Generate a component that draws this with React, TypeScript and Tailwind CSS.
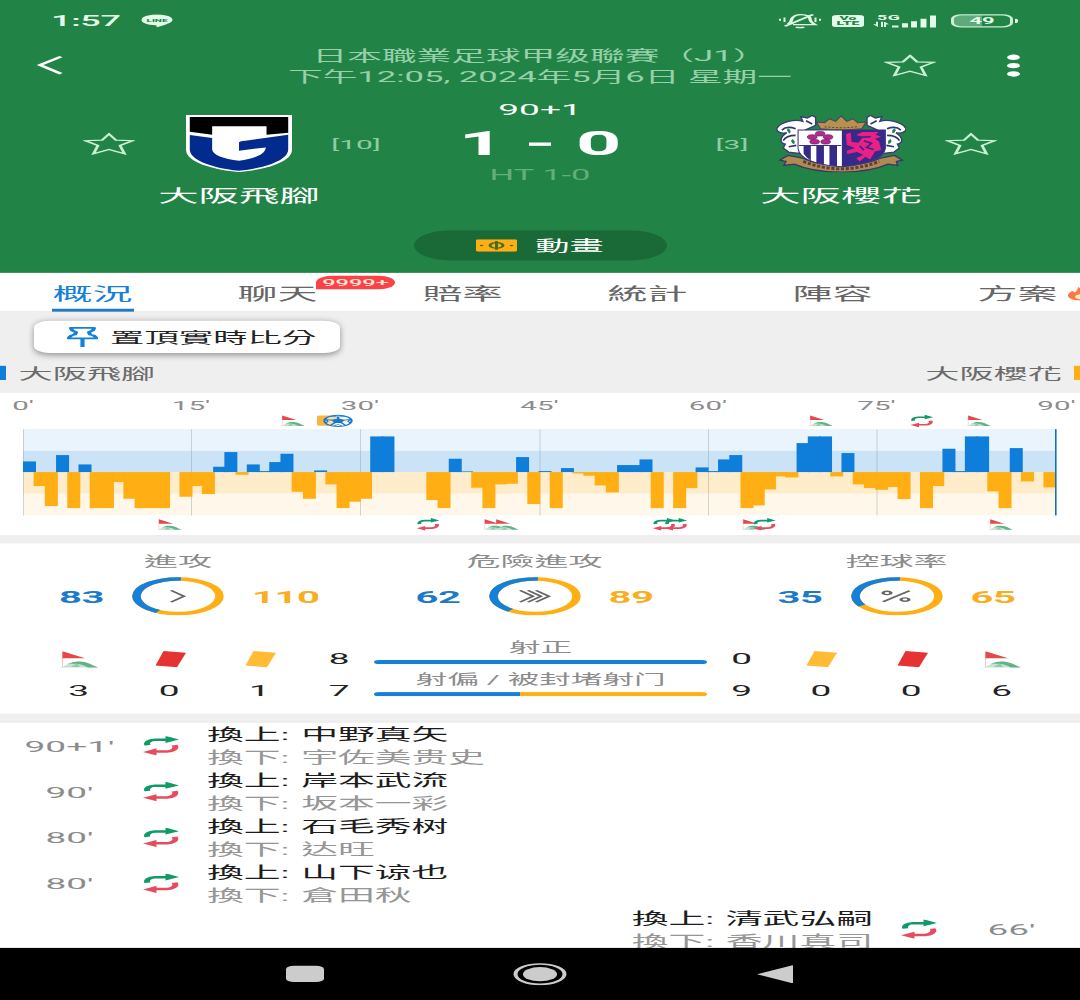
import React from 'react';

interface IconProps {
    className?: string;
}

const BLUE = '#0f7edb';
const ORANGE = '#ffae13';

// one value per minute, positive = home pressure, negative = away pressure
const MOMENTUM = [
    32, -42, -102, 51, -108, 23, -108, -108, -30, -80, -108, -108, -108, 0, -74, -42,
    -66, 16, 60, -8, 23, 3, 30, 55, -59, -80, 5, -37, -108, -89, -80, 107,
    107, 0, 0, 0, -84, -108, 40, 2, -47, -108, -37, -35, 45, -96, 3, -108,
    12, -4, -11, -40, -61, 21, 21, 38, -108, 0, -108, -48, 14, 3, 38, 51,
    -108, -100, -52, -13, -16, 87, 107, 107, -13, 57, -37, -48, -53, -45, -81, 0,
    -108, -42, 70, 3, 107, 107, -58, -108, 72, -28, 0, -46,
];

const TICKS = [
    { x: 23, label: "0'" },
    { x: 191, label: "15'" },
    { x: 360, label: "30'" },
    { x: 539.5, label: "45'" },
    { x: 708, label: "60'" },
    { x: 876.5, label: "75'" },
    { x: 1056.5, label: "90'" },
];

const MARKERS = [
    { type: 'corner', x: 280, y: 66 },
    { type: 'card', x: 317, y: 66 },
    { type: 'goal', x: 323, y: 64 },
    { type: 'corner', x: 808, y: 66 },
    { type: 'sub', x: 910.5, y: 65 },
    { type: 'corner', x: 966, y: 66 },
    { type: 'corner', x: 156.7, y: 315 },
    { type: 'sub', x: 416.7, y: 313 },
    { type: 'corner', x: 482.5, y: 315 },
    { type: 'corner', x: 494, y: 315 },
    { type: 'sub', x: 652.7, y: 313 },
    { type: 'sub', x: 664.5, y: 313 },
    { type: 'corner', x: 741, y: 315 },
    { type: 'sub', x: 753, y: 313 },
    { type: 'corner', x: 988, y: 315 },
];

const TABS = ['概況', '聊天', '賠率', '統計', '陣容', '方案'];

const STATS = [
    { label: '進攻', home: 83, away: 110, share: 0.43, icon: 'single', width: 'w-[356px]' },
    { label: '危險進攻', home: 62, away: 89, share: 0.41, icon: 'triple', width: 'w-[357px]' },
    { label: '控球率', home: 35, away: 65, share: 0.35, icon: 'percent', width: 'w-[367px]' },
];

const EVENTS = [
    { time: "90+1'", on: '中野真矢', off: '宇佐美贵史', side: 'home' },
    { time: "90'", on: '岸本武流', off: '坂本一彩', side: 'home' },
    { time: "80'", on: '石毛秀树', off: '达旺', side: 'home' },
    { time: "80'", on: '山下谅也', off: '倉田秋', side: 'home' },
    { time: "66'", on: '清武弘嗣', off: '香川真司', side: 'away' },
];

function StarIcon({ className }: IconProps) {
    return (
        <svg viewBox="0 0 52 54" className={className} fill="none" stroke="#c9f0d3" strokeWidth="3">
            <path d="M26 3.5 L33 18.500 L49.500 19.800 L37 31 L41.500 51 L26 41 L10.500 51 L15 31 L2.500 19.800 L19 18.500 Z" />
        </svg>
    );
}

function CornerShape() {
    return (
        <g>
            <path d="M3.5 1 V38" stroke="#f3a9a0" strokeWidth="1" />
            <path d="M3.5 0 L26 17 H3.5 Z" fill="#e5484b" />
            <path d="M0 39 C6 37 10 26 20 25 C28 25 33 33 39 39 Z" fill="#c3e3d0" />
            <path d="M8 31 C14 25 17 24 21 24.5 C29 26 33 33 39 39 H29 C24 31 18 28 8 31 Z" fill="#5fb487" />
            <path d="M12 38 L18 29 L21 38 Z" fill="#8ecbaa" />
        </g>
    );
}

function SubShape() {
    return (
        <g fill="none" strokeWidth="6">
            <path d="M4.500 21.500 C2.500 14 7 9 12 8.500 H25" stroke="#0f9a66" />
            <path d="M22.500 -1 L36 8 L22.500 16 Z" fill="#0f9a66" stroke="none" />
            <path d="M31.500 21.500 C34.500 30 29 36.500 24 36.800 H11" stroke="#e74c5e" />
            <path d="M13.500 29 L0 37.500 L13.500 46 Z" fill="#e74c5e" stroke="none" />
        </g>
    );
}

function GoalShape() {
    return (
        <g fill="none" stroke="#1577cf" strokeWidth="2.2">
            <circle cx="15" cy="15" r="13.6" fill="#fff" fillOpacity="0.55" />
            <path d="M15 10 L20 13.5 L18 19 H12 L10 13.5 Z" fill="#1577cf" />
            <path d="M15 5 V10 M26 12 L20 13.5 M22 25 L18 19 M8 25 L12 19 M4 12 L10 13.5" />
            <path d="M8 4 L15 6 L22 4 M28 10 L25 16 L27 20 M19 27 L15 24 L11 27 M3 20 L5 16 L2 10" strokeWidth="1.6" />
        </g>
    );
}

function CornerIcon() {
    return (
        <svg viewBox="0 0 39 40" className="mt-1 mr-0.5 h-10 w-[39px]">
            <CornerShape />
        </svg>
    );
}

function SubIcon() {
    return (
        <svg viewBox="0 0 36 46" className="h-[46px] w-9 shrink-0">
            <SubShape />
        </svg>
    );
}

function CardIcon({ color }: { color: string }) {
    return (
        <svg viewBox="0 0 31 40" className="mt-0.5 ml-px h-10 w-[31px]">
            <path d="M8.500 0.500 L31 4.500 L22 39.500 L0.500 35 Z" fill={color} />
        </svg>
    );
}

function GambaCrest() {
    return (
        <svg viewBox="540 45 308 171" preserveAspectRatio="none" className="h-[137px] w-[106px]">
            <path d="M540 45 H848 V148 C848 178 800 204 694 216 C588 204 540 178 540 148 Z" fill="#fff" />
            <path d="M551 51 H837 V98 L774 104 V79 H616 V104 L551 95 Z" fill="#000" />
            <path d="M551 105 L616 114 V148 C618 165 648 175 694 182 C740 175 770 163 772 142 L694 152 V127 Q694 124 712 122 L837 104 V148 C837 176 784 202 694 212 C604 202 551 176 551 148 Z" fill="#032b8d" />
        </svg>
    );
}

function CerezoCrest() {
    return (
        <svg viewBox="685 45 377 172" preserveAspectRatio="none" className="h-[138px] w-[130px]">
            <g id="mantle">
                <path d="M800 52 L790 46 L776 54 L757 50 L763 64 C740 56 700 66 688 84 C684 94 700 102 716 98 C696 112 694 128 712 132 L706 144 L722 156 L752 160 L770 90 L800 76 Z" fill="#fff" stroke="#3a3a78" strokeWidth="4" />
                <path d="M702 90 Q716 76 742 86 M706 122 Q714 106 742 106 M722 140 L744 136 M772 62 L790 72" fill="none" stroke="#2c3870" strokeWidth="5" />
                <path d="M718 88 Q726 92 722 98 M730 120 Q738 124 734 130" fill="none" stroke="#218346" strokeWidth="8" />
            </g>
            <use href="#mantle" transform="translate(1749 0) scale(-1 1)" />
            <path d="M696 180 L720 166 L762 174 C800 192 845 196 874 196 C904 196 948 192 988 174 L1028 166 L1052 180 L1034 184 L1038 196 L1010 192 C970 210 920 216 874 216 C828 216 778 210 738 192 L708 196 L714 184 Z" fill="#b18a52" stroke="#3a3768" strokeWidth="4" />
            <path d="M749 90 H1002 V146 C996 176 950 194 874 200 C800 194 754 176 749 146 Z" fill="#fff" stroke="#3a2f80" strokeWidth="3" />
            <path d="M876 90 H1002 V146 C996 176 950 194 876 200 Z" fill="#35298a" />
            <path d="M765 138 H786 V182 Q772 172 765 160 Z M802 138 H824 V193 L802 188 Z M840 138 H862 V198 L840 196 Z" fill="#35298a" />
            <path d="M752 136 H874" stroke="#3a2f80" strokeWidth="3" />
            <g fill="#c02487" stroke="#3f2a6c" strokeWidth="2">
                <ellipse cx="813" cy="101" rx="14" ry="7" />
                <ellipse cx="790" cy="111" rx="14" ry="7" />
                <ellipse cx="836" cy="111" rx="14" ry="7" />
                <ellipse cx="797" cy="125" rx="14" ry="7" />
                <ellipse cx="829" cy="125" rx="14" ry="7" />
            </g>
            <circle cx="813" cy="114" r="4" fill="#fff" />
            <path d="M918 104 L936 96 L982 96 L974 104 L990 110 L972 116 L984 124 L990 150 L972 154 L958 178 L944 170 L928 184 L918 174 L938 164 L920 156 L892 162 L890 152 L914 144 L890 134 L888 102 L902 98 L904 126 L924 128 L936 112 Z" fill="#ec1f87" />
            <path d="M940 122 L962 130 L948 142 L968 148 M928 138 L940 150 M920 112 L960 110" fill="none" stroke="#35298a" strokeWidth="5" />
            <path d="M814 86 L802 66 L826 68 L840 56 L858 64 L874 48 L890 64 L908 56 L922 68 L946 66 L934 86 Q874 92 814 86 Z" fill="#b8914f" stroke="#4a4162" strokeWidth="3" />
            <path d="M826 80 Q874 86 922 80" fill="none" stroke="#5a4540" strokeWidth="3" strokeDasharray="6 5" />
            <path d="M764 184 Q820 206 874 206 Q930 206 984 184" fill="none" stroke="#5d3f3c" strokeWidth="9" strokeDasharray="9 5" />
        </svg>
    );
}

function StatusBar() {
    return (
        <div className="flex h-24 items-center pt-1 pr-[62px] pl-[51px] text-[#e4fbea]">
            <span className="text-[36px] font-medium tracking-[-0.300px]">1:57</span>
            <svg viewBox="0 0 32 32" className="ml-5 h-8 w-8">
                <path d="M16 1 C25 1 31.500 6.500 31.500 14 C31.500 21 23 26 17 31 C15 32 16 28 15 26.500 C6 26 0.500 21 0.500 14 C0.500 6.500 7 1 16 1 Z" fill="#e4fbea" />
                <text x="16" y="18" textAnchor="middle" fontSize="10" fontWeight="800" fill="#218346">LINE</text>
            </svg>
            <div className="flex-1" />
            <svg viewBox="0 0 42 38" className="h-[38px] w-[42px]" fill="none" stroke="#e4fbea" strokeWidth="3.400">
                <path d="M9 27 C13 23 12 18 13 13 C15 6 19 4 22 4 C28 4 31 9 31 14 C31 20 33 24 36 28 H14" />
                <path d="M6 32 L34 4" />
                <path d="M17 34 Q21 37 25 34" />
                <path d="M1 14 V19 M5.500 11 V22 M36.500 11 V22 M41 14 V19" strokeWidth="2" />
            </svg>
            <div className="ml-[11px] flex h-[29px] w-8 flex-col items-center justify-center rounded-[5px] bg-[#e4fbea] text-[14px] leading-[12px] font-black text-[#218346]">
                <span>Vo</span>
                <span>LTE</span>
            </div>
            <svg viewBox="0 0 64 34" className="ml-[9px] h-[34px] w-16" fill="#e4fbea">
                <text x="4" y="14" fontSize="18" fontWeight="700" textLength="23">5G</text>
                <path d="M0 25 H3 V19 H5 V32 Z M8 19 H10 V32 H8 Z M12 20 L16 25 L13 26 V32 H11 V20 Z" />
                <path d="M19 28 H25.500 V33 H19 Z M29 23 H35 V33 H29 Z M38 18 H44 V33 H38 Z M47.500 12 H53.500 V33 H47.500 Z M57 4 H63 V33 H57 Z" />
            </svg>
            <div className="ml-[14px] flex h-8 w-[62px] items-center justify-center rounded-[11px] border-[3px] border-[#c9f0d3] bg-linear-to-r from-[#5eaa7a] from-50% to-transparent to-50% text-[22px] font-bold">
                49
            </div>
            <div className="ml-0.5 h-2.5 w-[3px] rounded-r bg-[#e4fbea]" />
        </div>
    );
}

function MatchHeader() {
    return (
        <header className="h-[655px] bg-[#218346]">
            <StatusBar />
            <div className="flex h-[122px] items-center">
                <div className="w-[200px] pl-[36px]">
                    <svg viewBox="0 0 27 48" className="h-12 w-[27px]" fill="none" stroke="#fff" strokeWidth="4.600">
                        <path d="M25 3 L4 23 L25 44" />
                    </svg>
                </div>
                <div className="flex-1 pt-0.5 text-center text-[34.700px] leading-[50px] whitespace-nowrap text-[#97d0a9]">
                    <div className="pt-px">日本職業足球甲级聯賽（J1）</div>
                    <div className="tracking-[-0.050px]">下午12:05, 2024年5月6日 星期一</div>
                </div>
                <div className="flex w-[200px] items-center pl-1">
                    <StarIcon className="h-[54px] w-[52px]" />
                    <div className="ml-[71px] flex flex-col gap-[7px]">
                        <span className="h-[13px] w-[13px] rounded-full bg-white" />
                        <span className="h-[13px] w-[13px] rounded-full bg-white" />
                        <span className="h-[13px] w-[13px] rounded-full bg-white" />
                    </div>
                </div>
            </div>
            <div className="flex h-[286px] items-start text-white">
                <StarIcon className="mt-[100px] ml-[83px] h-[54px] w-[52px]" />
                <div className="ml-6 flex w-40 flex-col items-center pt-[58px]">
                    <GambaCrest />
                    <span className="mt-[30px] text-[40.400px] leading-[56px] whitespace-nowrap">大阪飛腳</span>
                </div>
                <span className="mt-[104px] w-[74px] text-center text-[30px] leading-[50px] whitespace-nowrap text-[#8fcca2]">[10]</span>
                <div className="mr-[14px] flex w-[294px] flex-col items-center">
                    <span className="mt-[21px] text-[37px] leading-[50px]">90+1</span>
                    <div className="mt-[10px] flex h-[90px] items-center gap-[25px] text-[79px] leading-[90px] font-bold">
                        <span>1</span>
                        <span className="mt-1 h-2 w-[22px] bg-white" />
                        <span>0</span>
                    </div>
                    <span className="mt-[9px] text-[34.500px] leading-[46px] text-[#64ad7d]">HT 1-0</span>
                </div>
                <span className="mt-[104px] ml-0.5 w-[58px] text-center text-[30px] leading-[50px] whitespace-nowrap text-[#8fcca2]">[3]</span>
                <div className="flex w-40 flex-col items-center pt-[58px]">
                    <CerezoCrest />
                    <span className="mt-[29px] text-[40.400px] leading-[56px] whitespace-nowrap">大阪櫻花</span>
                </div>
                <StarIcon className="mt-[100px] ml-6 h-[54px] w-[52px]" />
            </div>
            <div className="flex justify-center pt-[49px]">
                <button className="flex h-[72px] w-[253px] items-center justify-center gap-[18px] rounded-full bg-[#1a6a37] text-[34.300px] text-white">
                    <svg viewBox="0 0 41 30" className="h-[30px] w-[41px]">
                        <rect width="41" height="30" rx="2" fill="#ffae13" />
                        <g fill="none" stroke="#4d6b1c" strokeWidth="3">
                            <circle cx="20.500" cy="15" r="6.500" />
                            <path d="M20.500 4.500 V25.500" />
                        </g>
                        <circle cx="5.500" cy="15" r="1.800" fill="#4d6b1c" />
                        <circle cx="35.500" cy="15" r="1.800" fill="#4d6b1c" />
                    </svg>
                    <span className="pt-[3px]">動畫</span>
                </button>
            </div>
        </header>
    );
}

function TabBar() {
    return (
        <nav className="relative flex h-[91px] bg-white">
            {TABS.map((tab, i) => (
                <div key={tab} className="relative flex w-[185px] shrink-0 justify-center">
                    <span className={i === 0 ? 'text-[40px] leading-[102px] text-[#1580d8]' : 'text-[40px] leading-[102px] text-[#666]'}>
                        {tab}
                    </span>
                    {i === 0 && <span className="absolute bottom-[-2px] left-[52px] h-[7px] w-[82px] bg-[#1b7bc9]" />}
                    {i === 1 && (
                        <span className="absolute top-[7px] left-[131px] flex h-8 w-[79px] items-center justify-center rounded-[16px] rounded-bl-none bg-[#fb4347] pt-0.5 text-[23.500px] font-medium text-[#ffe3d6]">
                            9999+
                        </span>
                    )}
                </div>
            ))}
            <svg viewBox="0 0 24 34" className="absolute top-[33px] right-[-12px] h-[34px] w-6">
                <path d="M10 0 C12 6 22 10 23 20 C24 30 16 34 11 33 C4 32 0 27 0 21 C0 16 3 13 4 10 L7 14 C9 10 10 5 10 0 Z" fill="#f9793f" />
                <circle cx="13" cy="24" r="6" fill="#fff0cf" />
            </svg>
        </nav>
    );
}

function PinRow() {
    return (
        <div className="h-[197px] bg-[#efefef] pt-[24px] text-[#6b6b6b]">
            <button className="ml-[34px] flex h-[77px] w-[306px] items-center gap-[12px] rounded-[16px] bg-white pl-[33px] text-[34.400px] whitespace-nowrap text-[#222] shadow-[0_4px_10px_rgba(0,0,0,0.4)]">
                <svg viewBox="0 0 31 50" className="h-[50px] w-[31px] shrink-0" fill="none" stroke="#1580d8" strokeWidth="4.200" strokeLinejoin="round">
                    <path d="M4 3 H27 L26 9 L22 13 L23 19 C27 21 29 24 29 28 H2 C2 24 4 21 8 19 L9 13 L5 9 Z" />
                    <path d="M15.500 28 V49" />
                </svg>
                <span className="pt-1">置頂實時比分</span>
            </button>
            <div className="flex h-[96px] items-center text-[34.200px]">
                <span className="mr-[12.500px] h-[34px] w-1.5 bg-[#0f7edb]" />
                <span className="pt-[5px]">大阪飛腳</span>
                <span className="flex-1" />
                <span className="pt-[5px]">大阪櫻花</span>
                <span className="ml-3 h-[34px] w-1.5 bg-[#ffae13]" />
            </div>
        </div>
    );
}

function Timeline() {
    const mid = 190;
    return (
        <section className="h-[341px] bg-white">
            <svg viewBox="0 0 1080 341" className="h-[341px] w-[1080px]">
                {TICKS.map((t) => (
                    <text key={t.label} x={t.x} y="40.500" textAnchor="middle" fontSize="29.500" fill="#8c8c8c">
                        {t.label}
                    </text>
                ))}
                <rect x="23" y="87" width="1033" height="52" fill="#e9f4fc" />
                <rect x="23" y="139" width="1033" height="51" fill="#cbe3f7" />
                <rect x="23" y="190" width="1033" height="52" fill="#ffeccb" />
                <rect x="23" y="242" width="1033" height="52" fill="#fff7ea" />
                {TICKS.slice(0, 6).map((t) => (
                    <rect key={t.label} x={t.x} y="87" width="1" height="207" fill="#7f8b94" fillOpacity="0.35" />
                ))}
                {MOMENTUM.map((v, i) => {
                    const x = i === 0 ? 23 : 22.4 + i * 11.22;
                    const h = Math.abs(v) * 0.8;
                    return <rect key={i} x={x} y={v > 0 ? mid - h : mid} width={i === 91 ? 12 : 13} height={h} fill={v > 0 ? BLUE : ORANGE} />;
                })}
                <rect x="1055" y="87" width="1.600" height="207" fill="#1b6fb5" />
                {MARKERS.map((m, i) => (
                    <g key={i} transform={`translate(${m.x} ${m.y - 12})`}>
                        {m.type === 'corner' && <g transform="scale(0.63 0.65)"><CornerShape /></g>}
                        {m.type === 'sub' && <g transform="scale(0.63 0.64)"><SubShape /></g>}
                        {m.type === 'card' && <rect width="19" height="25" rx="3" fill="#f6b73c" />}
                        {m.type === 'goal' && <GoalShape />}
                    </g>
                ))}
            </svg>
        </section>
    );
}

function Ring({ share, icon }: { share: number; icon: string }) {
    const c = 2 * Math.PI * 41.5;
    return (
        <svg viewBox="0 0 92 92" className="size-[92px]" fill="none">
            <circle cx="46" cy="46" r="41.500" stroke={ORANGE} strokeWidth="8.500" />
            <circle
                cx="46"
                cy="46"
                r="41.500"
                stroke="#1580d8"
                strokeWidth="8.500"
                strokeDasharray={`${c * share} ${c}`}
                transform="translate(92 0) scale(-1 1) rotate(-94 46 46)"
            />
            <g stroke="#666" strokeWidth="3.200">
                {icon === 'single' && <path d="M39 32 L52 46 L39 60" />}
                {icon === 'triple' && <path d="M31 32 L44 46 L31 60 M39 32 L52 46 L39 60 M47 32 L60 46 L47 60" />}
                {icon === 'percent' && (
                    <>
                        <circle cx="36" cy="38" r="4" />
                        <circle cx="54" cy="54" r="4" />
                        <path d="M58.500 33 L32 59" />
                    </>
                )}
            </g>
        </svg>
    );
}

function ShotBar({ label, home, away }: { label: string; home: number; away: number }) {
    return (
        <div className="flex h-[77px] flex-col items-center">
            <span className="text-[31.600px] leading-[50px] whitespace-nowrap text-[#8c8c8c]">{label}</span>
            <div className="mt-[5px] flex h-2.5 w-full overflow-hidden rounded-full">
                <span className="bg-[#1580d8]" style={{ flex: home }} />
                <span className="bg-[#ffae13]" style={{ flex: away }} />
            </div>
        </div>
    );
}

function Tally({ children, value }: { children: React.ReactNode; value: number }) {
    return (
        <div className="flex w-[90.400px] flex-col items-center">
            <div className="flex h-[76px] items-center">{children}</div>
            <span className="pr-px leading-[78px]">{value}</span>
        </div>
    );
}

function StatsPanel() {
    return (
        <section className="h-[409px] bg-white">
            <div className="flex pt-[16px]">
                {STATS.map((s) => (
                    <div key={s.label} className={`${s.width} flex flex-col items-center`}>
                        <span className="text-[34px] leading-[52px] text-[#8c8c8c]">{s.label}</span>
                        <div className="mt-[13px] grid w-full grid-cols-[1fr_92px_1fr] items-center gap-[28px] text-[40px] leading-[50px] font-bold">
                            <span className="pt-1 text-right tracking-[-0.500px] text-[#1b7bc9]">{s.home}</span>
                            <Ring share={s.share} icon={s.icon} />
                            <span className="pt-1 tracking-[-0.500px] text-[#f9ae22]">{s.away}</span>
                        </div>
                    </div>
                ))}
            </div>
            <div className="mt-[66px] flex pl-[34px] text-[37px] text-[#222]">
                <Tally value={3}><CornerIcon /></Tally>
                <Tally value={0}><CardIcon color="#e63232" /></Tally>
                <Tally value={1}><CardIcon color="#ffbb33" /></Tally>
                <div className="flex w-[69px] flex-col items-center pr-px leading-[77px]">
                    <span>8</span>
                    <span>7</span>
                </div>
                <div className="-mt-3.5 w-[333px]">
                    <ShotBar label="射正" home={8} away={0} />
                    <ShotBar label="射偏 / 被封堵射门" home={7} away={9} />
                </div>
                <div className="flex w-[69px] flex-col items-center leading-[77px]">
                    <span>0</span>
                    <span>9</span>
                </div>
                <Tally value={0}><CardIcon color="#ffbb33" /></Tally>
                <Tally value={0}><CardIcon color="#e63232" /></Tally>
                <Tally value={6}><CornerIcon /></Tally>
            </div>
        </section>
    );
}

function EventRow({ event }: { event: (typeof EVENTS)[number] }) {
    const home = event.side === 'home';
    return (
        <div className={home ? 'flex h-[110px] items-center' : 'flex h-[110px] flex-row-reverse items-center'}>
            <span className={home ? 'w-[139px] pt-[3px] text-center text-[37px] text-[#8c8c8c]' : 'w-[137px] pt-[3px] text-center text-[37px] text-[#8c8c8c]'}>
                {event.time}
            </span>
            <div className={home ? 'mr-[28px] ml-1' : 'mr-[6px] ml-[28px]'}>
                <SubIcon />
            </div>
            <div className="pt-1 text-[36.800px] leading-[55px] whitespace-nowrap [word-spacing:2.500px]">
                <div className="text-[#1c1c1c]">換上: {event.on}</div>
                <div className="text-[#969696]">換下: {event.off}</div>
            </div>
        </div>
    );
}

function NavBar() {
    return (
        <footer className="flex h-[125px] items-center bg-black">
            <span className="ml-[286px] h-[39px] w-[38px] rounded-[8px] bg-[#ccc]" />
            <svg viewBox="0 0 54 54" className="ml-[189px] size-[54px]">
                <circle cx="27" cy="27" r="24.500" fill="none" stroke="#ccc" strokeWidth="4" />
                <circle cx="27" cy="27" r="17" fill="#ccc" />
            </svg>
            <svg viewBox="0 0 36 44" className="ml-[190px] h-11 w-9">
                <path d="M34.500 1 Q36 0 36 2 V42 Q36 44 34.500 43 L0 22 Z" fill="#ccc" />
            </svg>
        </footer>
    );
}

export default function App() {
    return (
        <div className="h-[1000px] w-[1080px] overflow-hidden bg-white">
            <div className="flex h-[2400px] w-[1080px] origin-top scale-y-[0.4166667] flex-col overflow-hidden bg-[#efefef] font-[Roboto,'Noto_Sans_CJK_TC',sans-serif]">
                <MatchHeader />
                <TabBar />
                <PinRow />
                <Timeline />
                <div className="h-5" />
                <StatsPanel />
                <div className="h-[22px]" />
                <section className="h-[540px] overflow-hidden bg-white">
                    {EVENTS.map((event, i) => (
                        <EventRow key={i} event={event} />
                    ))}
                </section>
                <NavBar />
            </div>
        </div>
    );
}
